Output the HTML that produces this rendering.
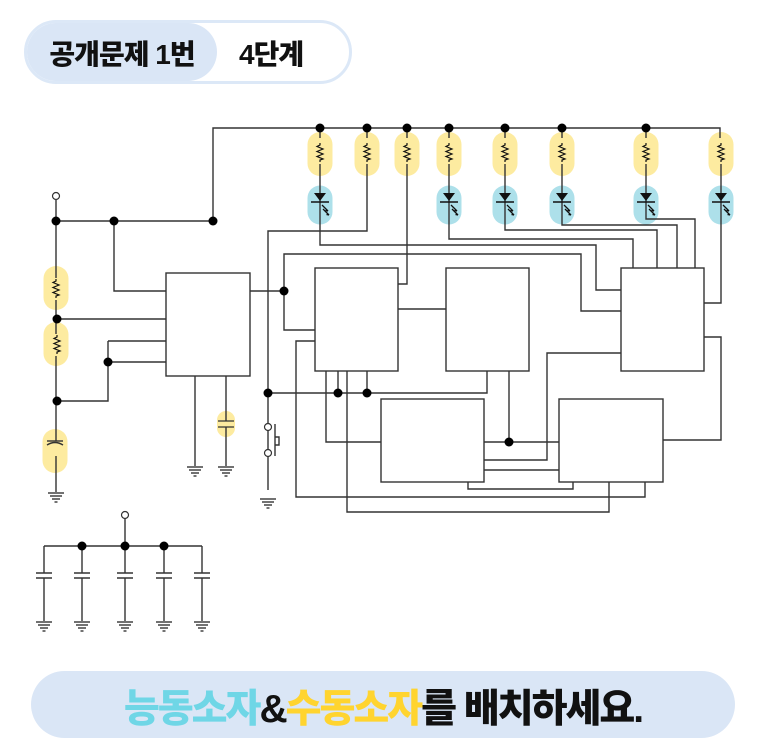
<!DOCTYPE html>
<html><head><meta charset="utf-8"><style>
html,body{margin:0;padding:0;background:#fff;width:768px;height:756px;overflow:hidden}
.hdr{position:absolute;left:24px;top:20px;width:322px;height:58px;border:3px solid #dce8f7;border-radius:32px;background:#fff;box-sizing:content-box}
.hdrl{position:absolute;left:0;top:0;width:190px;height:58px;border-radius:30px;background:#dae6f6}
.t{position:absolute;font-family:"Liberation Sans","Noto Sans CJK KR",sans-serif;font-weight:900;color:#111}
.ban{position:absolute;left:31px;top:671px;width:704px;height:67px;border-radius:34px;background:#dae6f6}
</style></head><body>
<div class="hdr"><div class="hdrl"></div>
<div class="t" style="left:0;width:190px;top:10px;text-align:center;font-size:28px;letter-spacing:-1px">공개문제 1번</div>
<div class="t" style="left:212px;top:10px;font-size:28px;letter-spacing:-1px">4단계</div></div>
<svg width="768" height="756" style="position:absolute;left:0;top:0" xmlns="http://www.w3.org/2000/svg">
<defs>
<g id="res"><path d="M0,-9 L0,-7 L-3,-5.5 L3,-3 L-3,-0.5 L3,2 L-3,4.5 L3,7 L0,8 L0,10" fill="none" stroke="#111" stroke-width="1.2"/></g>
<g id="led"><path d="M-6,-8 L6,-8 L0,0 Z" fill="#111"/><path d="M-9,1 L9,1" stroke="#111" stroke-width="1.5"/><path d="M2,4 L8,10 M3,8 L9,14" stroke="#111" stroke-width="1.3"/><path d="M8,10 L5.5,9.5 M9,14 L6.5,13.5" stroke="#111" stroke-width="1.3"/></g>
<g id="gnd" stroke="#444" stroke-width="1.4"><path d="M-8,0 H8 M-6,3 H6 M-4,6 H4 M-1.5,9 H1.5"/></g>
<g id="ypill"><rect x="-12.5" y="-22" width="25" height="44" rx="12.5" fill="#fdeba0"/></g>
<g id="bpill"><rect x="-12.5" y="-19.5" width="25" height="39" rx="12.5" fill="#ade0ea"/></g>
</defs>
<g>
<use href="#ypill" x="320" y="154"/><use href="#ypill" x="367" y="154"/><use href="#ypill" x="407" y="154"/><use href="#ypill" x="449" y="154"/><use href="#ypill" x="505" y="154"/><use href="#ypill" x="562" y="154"/><use href="#ypill" x="646" y="154"/><use href="#ypill" x="721" y="154"/>
<use href="#bpill" x="320" y="205"/><use href="#bpill" x="449" y="205"/><use href="#bpill" x="505" y="205"/><use href="#bpill" x="562" y="205"/><use href="#bpill" x="646" y="205"/><use href="#bpill" x="721" y="205"/>
<use href="#ypill" x="56" y="288"/><use href="#ypill" x="56" y="344"/><use href="#ypill" x="55" y="451"/>
<rect x="217" y="411" width="18" height="26" rx="9" fill="#fdeba0"/>
</g>
<g fill="none" stroke="#333" stroke-width="1.4">
<path d="M213,221 V128 H720 V144"/>
<path d="M320,128 V245 H596 V290 H621"/>
<path d="M367,128 V231 H268 V490"/>
<path d="M407,128 V284 H398"/>
<path d="M449,128 V239 H633 V268"/>
<path d="M505,128 V230 H657 V268"/>
<path d="M562,128 V225 H677 V268"/>
<path d="M646,128 V219 H695 V268"/>
<path d="M721,160 V303 H704"/>
<rect x="166" y="273" width="84" height="103"/>
<rect x="315" y="268" width="83" height="103"/>
<rect x="446" y="268" width="83" height="103"/>
<rect x="621" y="268" width="83" height="103"/>
<rect x="381" y="399" width="103" height="83"/>
<rect x="559" y="399" width="104" height="83"/>
<path d="M398,309 H446"/>
<path d="M250,291 H284 V330 H315 M284,291 V254 H581 V311 H621"/>
<path d="M315,341 H296 V497 H645 V482"/>
<path d="M326,371 V442 H381"/>
<path d="M338,371 V393"/>
<path d="M347,371 V512 H609 V482"/>
<path d="M367,371 V393"/>
<path d="M268,393 H487 V371"/>
<path d="M509,371 V442 M484,442 H559"/>
<path d="M621,353 H547 V460 H484"/>
<path d="M484,470 H559"/>
<path d="M468,482 V489 H573 V482"/>
<path d="M704,337 H721 V440 H663"/>
<path d="M56,200 V221 H213 M114,221 V291 H166"/>
<path d="M56,221 V441 M56,456 V492"/>
<path d="M57,319 H166 M108,341 H166 M108,362 H166 M108,341 V401 H57"/>
<path d="M195,376 V466 M226,376 V421 M226,427 V466"/>
<path d="M218,421 H234 M218,427 H234" stroke-width="1.3"/>
<path d="M47,445 Q55,440 63,445" /><path d="M47,441 H63"/>
<path d="M275,424 V456 M275,437 H279 V445 H275"/>
<path d="M125,519 V546 M44,546 H202 M44,546 V573 M82,546 V573 M125,546 V573 M164,546 V573 M202,546 V573 M44,578 V621 M82,578 V621 M125,578 V621 M164,578 V621 M202,578 V621"/>
<path d="M36,573 H52 M36,578 H52 M74,573 H90 M74,578 H90 M117,573 H133 M117,578 H133 M156,573 H172 M156,578 H172 M194,573 H210 M194,578 H210"/>
</g>
<g fill="#fdeba0"><rect x="313" y="138" width="14" height="26"/><rect x="360" y="138" width="14" height="26"/><rect x="400" y="138" width="14" height="26"/><rect x="442" y="138" width="14" height="26"/><rect x="498" y="138" width="14" height="26"/><rect x="555" y="138" width="14" height="26"/><rect x="639" y="138" width="14" height="26"/><rect x="714" y="138" width="14" height="26"/><rect x="49" y="278" width="14" height="22"/><rect x="49" y="334" width="14" height="22"/></g>
<use href="#res" x="320" y="152"/><use href="#res" x="367" y="152"/><use href="#res" x="407" y="152"/><use href="#res" x="449" y="152"/><use href="#res" x="505" y="152"/><use href="#res" x="562" y="152"/><use href="#res" x="646" y="152"/><use href="#res" x="721" y="152"/>
<use href="#res" x="56" y="288"/><use href="#res" x="57" y="344"/>
<use href="#led" x="320" y="201"/><use href="#led" x="449" y="201"/><use href="#led" x="505" y="201"/><use href="#led" x="562" y="201"/><use href="#led" x="646" y="201"/><use href="#led" x="721" y="201"/>
<use href="#gnd" x="56" y="493"/><use href="#gnd" x="195" y="467"/><use href="#gnd" x="226" y="467"/><use href="#gnd" x="268" y="499"/>
<use href="#gnd" x="44" y="622"/><use href="#gnd" x="82" y="622"/><use href="#gnd" x="125" y="622"/><use href="#gnd" x="164" y="622"/><use href="#gnd" x="202" y="622"/>
<g fill="#000">
<circle cx="320" cy="128" r="4.5"/><circle cx="367" cy="128" r="4.5"/><circle cx="407" cy="128" r="4.5"/><circle cx="449" cy="128" r="4.5"/><circle cx="505" cy="128" r="4.5"/><circle cx="562" cy="128" r="4.5"/><circle cx="646" cy="128" r="4.5"/>
<circle cx="56" cy="221" r="4.5"/><circle cx="114" cy="221" r="4.5"/><circle cx="213" cy="221" r="4.5"/>
<circle cx="57" cy="319" r="4.5"/><circle cx="108" cy="362" r="4.5"/><circle cx="57" cy="401" r="4.5"/>
<circle cx="284" cy="291" r="4.5"/><circle cx="268" cy="393" r="4.5"/><circle cx="338" cy="393" r="4.5"/><circle cx="367" cy="393" r="4.5"/><circle cx="509" cy="442" r="4.5"/>
<circle cx="82" cy="546" r="4.5"/><circle cx="125" cy="546" r="4.5"/><circle cx="164" cy="546" r="4.5"/>
</g>
<g fill="#fff" stroke="#333" stroke-width="1.2">
<circle cx="56" cy="196" r="3.5"/><circle cx="268" cy="427" r="3.5"/><circle cx="268" cy="453" r="3.5"/><circle cx="125" cy="515" r="3.5"/>
</g>
</svg>
<div class="ban"></div>
<div class="t" style="left:31px;width:704px;top:678px;text-align:center;font-size:39px;letter-spacing:-2px"><span style="color:#6fd6e6">능동소자</span>&amp;<span style="color:#ffd42f">수동소자</span>를 배치하세요.</div>
</body></html>
